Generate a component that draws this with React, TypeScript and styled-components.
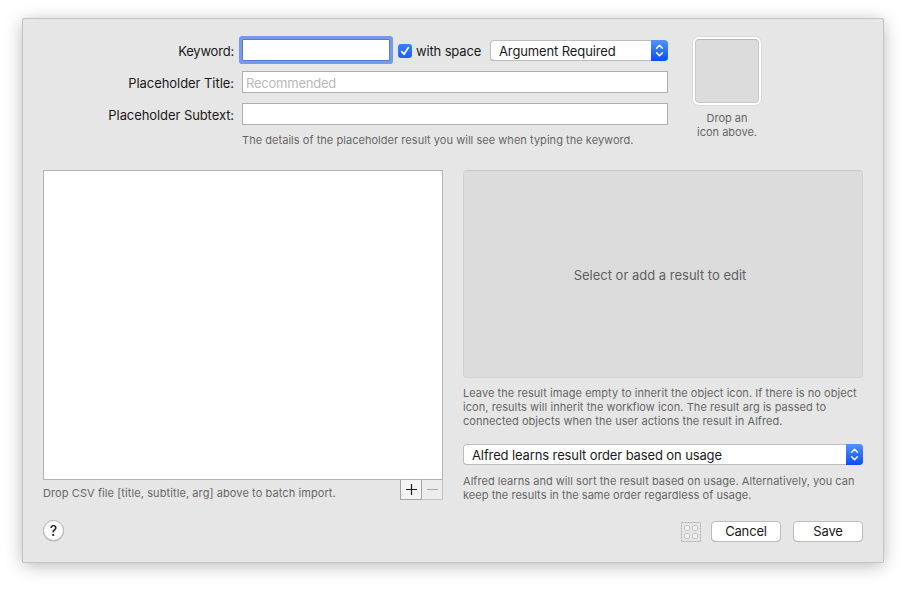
import React from "react";
import styled, { createGlobalStyle } from "styled-components";

const GlobalStyle = createGlobalStyle`
  *, *::before, *::after { box-sizing: border-box; }
  body {
    margin: 0;
    background: #fff;
    font-family: Inter, "Liberation Sans", sans-serif;
    color: #1a1a1a;
    overflow: hidden;
  }
  button, input { font-family: inherit; color: inherit; }
`;

const Stage = styled.div`
  width: 906px;
  height: 589px;
  padding: 19px 23px;
`;

const Sheet = styled.div`
  width: 860px;
  height: 543px;
  padding: 18px 20px 20px;
  display: flex;
  flex-direction: column;
  background: #e6e6e6;
  border-radius: 1px;
  box-shadow: 0 0 0 1px #c3c3c3, 0 3px 18px rgba(0, 0, 0, 0.3);
`;

const Header = styled.div`
  height: 133px;
  display: flex;
`;

const Form = styled.div`
  width: 625px;
  display: grid;
  grid-template-columns: 191px 426px;
  grid-template-rows: 22px 22px 22px 14px;
  column-gap: 8px;
  row-gap: 10px;
  padding-top: 2px;
`;

const Label = styled.label<{ $spacing: number }>`
  text-align: right;
  white-space: nowrap;
  font-size: 13px;
  line-height: 25px;
  letter-spacing: ${(p) => p.$spacing}px;
`;

const Field = styled.input<{ $focused?: boolean }>`
  width: ${(p) => (p.$focused ? "148px" : "100%")};
  height: 22px;
  padding: 2px 3px 0;
  background: #fff;
  border: 1px solid ${(p) => (p.$focused ? "#577bd0" : "#afafaf")};
  border-radius: ${(p) => (p.$focused ? 1 : 0)}px;
  box-shadow: ${(p) => (p.$focused ? "0 0 0 3px #7799ea" : "none")};
  outline: none;
  font-size: 13px;
  letter-spacing: -0.22px;
  &::placeholder { color: #b9b9b9; opacity: 1; }
`;

const KeywordRow = styled.div`
  display: flex;
  align-items: flex-start;
`;

const Check = styled.span`
  width: 14px;
  height: 14px;
  margin: 5px 4px 0 8px;
  border-radius: 3px;
  background: linear-gradient(#3c7dfb, #1f62f5);
  svg { display: block; }
`;

const CheckLabel = styled.span`
  width: 74px;
  font-size: 13px;
  line-height: 25px;
  white-space: nowrap;
  letter-spacing: -0.15px;
`;

const Popup = styled.button<{ $width: number; $spacing: number }>`
  width: ${(p) => p.$width}px;
  height: 21px;
  flex: none;
  padding: 0;
  display: flex;
  justify-content: space-between;
  background: #fff;
  border: 0;
  border-radius: 4px;
  box-shadow: inset 0 0 0 1px #bdbdbd, inset 0 -1px 0 #a5a5a5;
  font-size: 13px;
  line-height: 23px;
  letter-spacing: ${(p) => p.$spacing}px;
  > span { padding-left: 9px; white-space: nowrap; }
  ${KeywordRow} & { margin-top: 1px; }
`;

const Stepper = styled.i`
  width: 17px;
  height: 21px;
  background: linear-gradient(#5293fc, #0a4dfb);
  border-radius: 0 4px 4px 0;
  svg { display: block; }
`;

const Hint = styled.p<{ $spacing: number }>`
  margin: 0;
  font-size: 11px;
  line-height: 14px;
  color: #666;
  white-space: pre;
  letter-spacing: ${(p) => p.$spacing}px;
`;

const FormHint = styled(Hint)`
  grid-column: 2;
  margin-top: -2px;
`;

const IconColumn = styled.div`
  width: 68px;
  margin-left: 25px;
  text-align: center;
`;

const IconWell = styled.div`
  height: 68px;
  margin-bottom: 6px;
  border: 2px solid #fff;
  border-radius: 6px;
  background: #fff;
  box-shadow: 0 0 0 1px #dadada;
  &::before {
    content: "";
    display: block;
    height: 64px;
    border: 1px solid #c8c8c8;
    border-top-color: #b8b8b8;
    border-radius: 4px;
    background: #dcdcdc;
  }
`;

const Columns = styled.div`
  display: flex;
  gap: 20px;
  height: 350px;
`;

const Column = styled.div`
  width: 400px;
`;

const ResultList = styled.div`
  height: 310px;
  background: #fff;
  border: 1px solid #b4b4b4;
`;

const ListFooter = styled.div`
  display: flex;
  justify-content: space-between;
  ${Hint} { padding-top: 6px; }
`;

const ListButtons = styled.div`
  display: flex;
  margin-top: -1px;
`;

const ListButton = styled.button<{ $off?: boolean }>`
  width: ${(p) => (p.$off ? 21 : 22)}px;
  height: 21px;
  padding: 0;
  background: ${(p) => (p.$off ? "#ececec" : "#f4f4f4")};
  border: 1px solid ${(p) => (p.$off ? "#c4c4c4" : "#a3a3a3")};
  border-left-width: ${(p) => (p.$off ? 0 : 1)}px;
  border-top-color: #b0b0b0;
  svg { display: block; }
`;

const EmptyResult = styled.div`
  height: 208px;
  margin-bottom: 8px;
  display: flex;
  align-items: center;
  justify-content: center;
  padding: 1px 6px 0 0;
  background: #dcdcdc;
  border: 1px solid #d2d2d2;
  border-top-color: #c8c8c8;
  border-radius: 4px;
  color: #606060;
  font-size: 13px;
`;

const OrderBlock = styled.div`
  padding: 16px 0 9px;
`;

const Footer = styled.div`
  display: flex;
  align-items: flex-start;
`;

const Help = styled.button`
  width: 21px;
  height: 21px;
  margin-right: auto;
  padding: 0;
  border: 1px solid #b4b4b4;
  border-radius: 50%;
  background: #fff;
  box-shadow: 0 0.5px 0.5px rgba(0, 0, 0, 0.2);
  font-size: 14px;
  font-weight: 500;
  line-height: 20px;
`;

const GridGlyph = styled.svg`
  margin: 2px 10px 0 0;
`;

const PushButton = styled.button`
  width: 70px;
  height: 21px;
  margin: 1px 0 0;
  padding: 0;
  border: 0;
  border-radius: 4.5px;
  background: #fff;
  box-shadow: inset 0 0 0 1px #bdbdbd, inset 0 -1px 0 #a5a5a5;
  font-size: 13px;
  line-height: 21px;
  letter-spacing: -0.15px;
  & + & { margin-left: 12px; }
`;

const Arrows = () => (
  <Stepper>
    <svg width="17" height="21" fill="none" stroke="#fff" strokeWidth="1.5" strokeLinecap="round" strokeLinejoin="round">
      <path d="M5.6 8.2 8.5 5.3 11.4 8.2M5.6 12.8 8.5 15.7 11.4 12.8" />
    </svg>
  </Stepper>
);

const cells = [
  [3.5, 3.5],
  [11.5, 3.5],
  [3.5, 11.5],
  [11.5, 11.5],
];

export default function App() {
  return (
    <Stage>
      <GlobalStyle />
      <Sheet>
        <Header>
          <Form>
            <Label $spacing={-0.2}>Keyword:</Label>
            <KeywordRow>
              <Field $focused />
              <Check>
                <svg width="14" height="14" fill="none" stroke="#fff" strokeWidth="1.7" strokeLinecap="round" strokeLinejoin="round">
                  <path d="M3.7 7.6 6 10.3 10.3 3.6" />
                </svg>
              </Check>
              <CheckLabel>with space</CheckLabel>
              <Popup $width={178} $spacing={-0.12}>
                <span>Argument Required</span>
                <Arrows />
              </Popup>
            </KeywordRow>
            <Label $spacing={-0.05}>Placeholder Title:</Label>
            <Field placeholder="Recommended" />
            <Label $spacing={-0.08}>Placeholder Subtext:</Label>
            <Field />
            <FormHint $spacing={0.04}>The details of the placeholder result you will see when typing the keyword.</FormHint>
          </Form>
          <IconColumn>
            <IconWell />
            <Hint $spacing={0}>{"Drop an\nicon above."}</Hint>
          </IconColumn>
        </Header>
        <Columns>
          <Column>
            <ResultList />
            <ListFooter>
              <Hint $spacing={0.09}>Drop CSV file [title, subtitle, arg] above to batch import.</Hint>
              <ListButtons>
                <ListButton>
                  <svg width="20" height="19" stroke="#1c1c1c" strokeWidth="1.2">
                    <path d="M5 9.5H16M10.5 4V15" />
                  </svg>
                </ListButton>
                <ListButton $off>
                  <svg width="20" height="19" stroke="#a8a8a8">
                    <path d="M5 9.5H16" />
                  </svg>
                </ListButton>
              </ListButtons>
            </ListFooter>
          </Column>
          <Column>
            <EmptyResult>Select or add a result to edit</EmptyResult>
            <Hint $spacing={0.06}>
              {"Leave the result image empty to inherit the object icon. If there is no object\nicon, results will inherit the workflow icon. The result arg is passed to\nconnected objects when the user actions the result in Alfred."}
            </Hint>
            <OrderBlock>
              <Popup $width={400} $spacing={-0.12}>
                <span>Alfred learns result order based on usage</span>
                <Arrows />
              </Popup>
            </OrderBlock>
            <Hint $spacing={0.04}>
              {"Alfred learns and will sort the result based on usage. Alternatively, you can\nkeep the results in the same order regardless of usage."}
            </Hint>
          </Column>
        </Columns>
        <Footer>
          <Help>?</Help>
          <GridGlyph width="20" height="20" fill="none">
            <rect x="0.5" y="0.5" width="19" height="19" stroke="#acacac" strokeDasharray="2 1" />
            {cells.map(([x, y]) => (
              <rect key={`${x}-${y}`} x={x} y={y} width="5" height="5" rx="1.2" fill="#f0f0f0" stroke="#c0c0c0" />
            ))}
          </GridGlyph>
          <PushButton>Cancel</PushButton>
          <PushButton>Save</PushButton>
        </Footer>
      </Sheet>
    </Stage>
  );
}
